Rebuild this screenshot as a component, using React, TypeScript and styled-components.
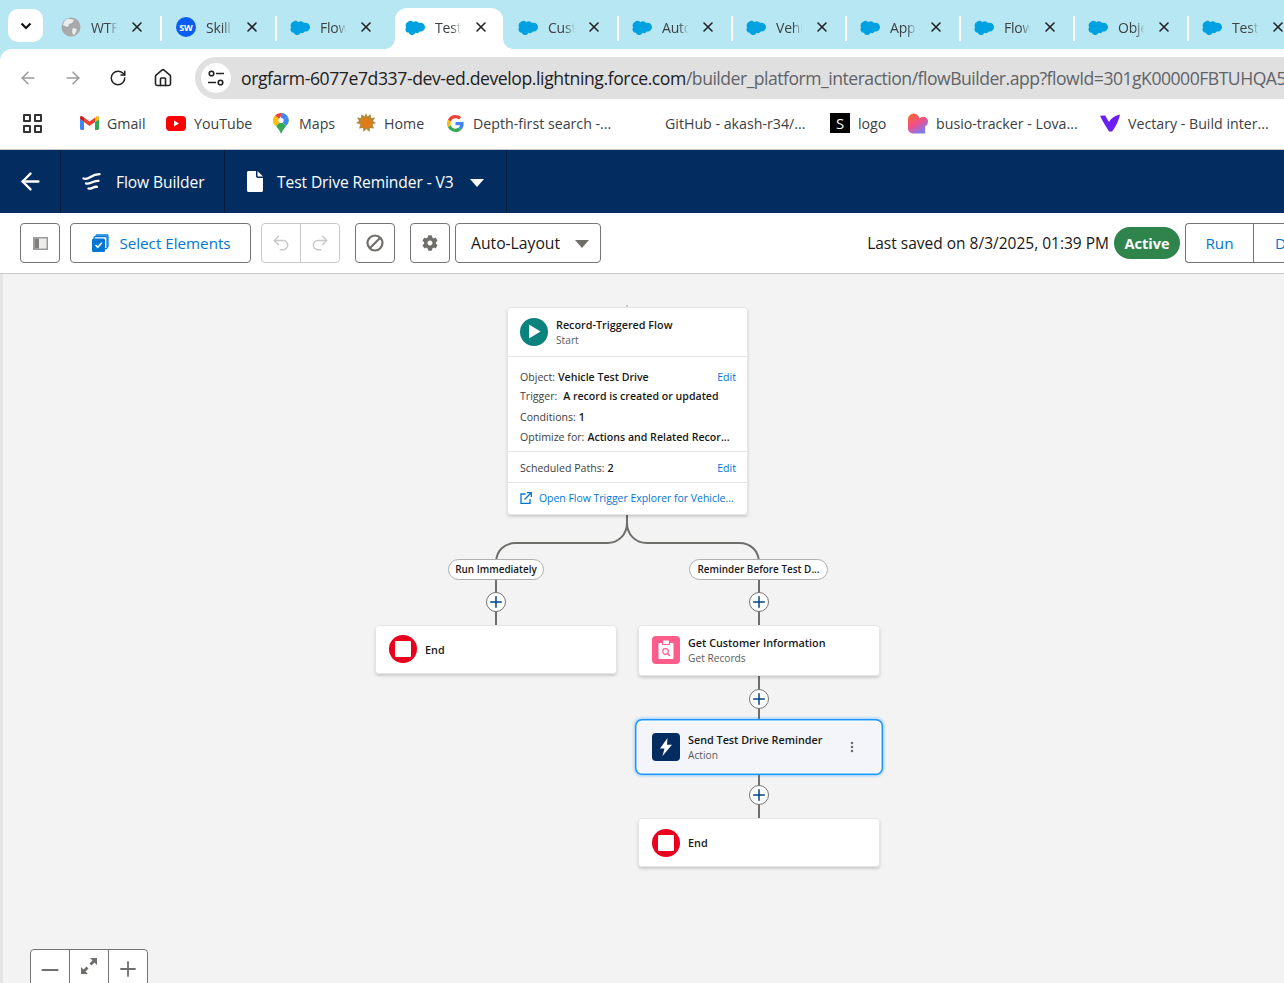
import React from 'react'
import styled, { createGlobalStyle } from 'styled-components'
import { ArrowLeft, ArrowRight, House, Minus, MoreVertical, Plus, Redo2, RotateCw, Undo2, X } from 'lucide-react'
import { FaCog } from 'react-icons/fa'

const Global = createGlobalStyle`
    html, body { margin: 0; padding: 0; background: #fff; }
    body { font-family: "Open Sans", "Noto Sans", sans-serif; color: #181818; }
    * { box-sizing: border-box; }
`

const Page = styled.div`
    width: 1284px;
    height: 983px;
    overflow: hidden;
    display: flex;
    flex-direction: column;
    background: #b7e7f3;
`

/* browser chrome */
const TabStrip = styled.div`
    height: 49px;
    flex-shrink: 0;
    display: flex;
    align-items: flex-start;
    padding: 8px 0 0 8px;
`

const TabMenu = styled.div`
    width: 35px;
    height: 33px;
    margin: 1px 5px 0 0;
    border-radius: 10px;
    background: #fff;
    display: flex;
    align-items: center;
    justify-content: center;
    flex-shrink: 0;
`

const Tab = styled.div<{ $active?: boolean; $sep?: boolean }>`
    position: relative;
    width: 114px;
    height: 41px;
    flex-shrink: 0;
    display: flex;
    align-items: center;
    padding: 0 0 3px 13px;
    z-index: ${p => (p.$active ? 2 : 1)};
    &:nth-child(2) { margin-right: 1px; }
    ${p => p.$sep && `
        &::after {
            content: '';
            position: absolute;
            right: 0;
            top: 8px;
            width: 2px;
            height: 25px;
            background: #fff;
        }
    `}
    ${p => p.$active && `
        padding-left: 14px;
        &::before {
            content: '';
            position: absolute;
            left: 4px;
            right: 2px;
            top: 0;
            bottom: 0;
            background: #fff;
            border-radius: 12px 12px 0 0;
            z-index: -1;
        }
        &::after {
            content: '';
            position: absolute;
            left: -6px;
            right: -8px;
            bottom: 0;
            height: 10px;
            z-index: -1;
            background:
                radial-gradient(circle at 0 0, #b7e7f3 9.5px, #fff 10px) left bottom / 10px 10px no-repeat,
                radial-gradient(circle at 100% 0, #b7e7f3 9.5px, #fff 10px) right bottom / 10px 10px no-repeat;
        }
    `}
`

const TabIcon = styled.div`
    width: 20px;
    height: 20px;
    margin-right: 10px;
    flex-shrink: 0;
    display: flex;
    align-items: center;
    justify-content: center;
`

const SwBadge = styled(TabIcon)`
    border-radius: 50%;
    background: #0b5cf0;
    color: #fff;
    font-size: 9px;
    font-weight: 700;
`

const TabTitle = styled.span`
    width: 28px;
    margin-right: 2px;
    overflow: hidden;
    white-space: nowrap;
    font-size: 14px;
    letter-spacing: -0.2px;
    color: #3c4043;
    -webkit-mask-image: linear-gradient(90deg, #000 60%, transparent 95%);
    mask-image: linear-gradient(90deg, #000 60%, transparent 95%);
`

const TabClose = styled.div`
    width: 18px;
    height: 18px;
    margin-left: 7px;
    display: flex;
    align-items: center;
    justify-content: center;
    color: #222;
`

const Chrome = styled.div`
    background: #fff;
    border-radius: 12px 0 0 0;
    flex-shrink: 0;
    position: relative;
`

const AddressRow = styled.div`
    height: 50px;
    padding: 8px 0 0 18px;
    display: flex;
    align-items: flex-start;
`

const NavButton = styled.div<{ $muted?: boolean }>`
    width: 20px;
    height: 20px;
    margin: 11px 25px 0 0;
    display: flex;
    align-items: center;
    justify-content: center;
    color: ${p => (p.$muted ? '#9a9a9a' : '#222')};
`

const Omnibox = styled.div`
    flex: 1;
    min-width: 0;
    height: 42px;
    margin-left: -3px;
    padding-left: 6px;
    border-radius: 21px 0 0 21px;
    background: #e0e0e0;
    display: flex;
    align-items: center;
    overflow: hidden;
`

const SiteInfo = styled.div`
    width: 30px;
    height: 30px;
    margin-right: 10px;
    border-radius: 50%;
    background: #fff;
    flex-shrink: 0;
    display: flex;
    align-items: center;
    justify-content: center;
`

const Url = styled.div`
    white-space: nowrap;
    font-size: 17.6px;
    letter-spacing: -0.5px;
    color: #5f6368;
    b { font-weight: 400; color: #202124; letter-spacing: -0.41px; }
`

const BookmarkRow = styled.div`
    height: 51px;
    padding: 0 0 2px 23px;
    border-bottom: 1px solid #c9c9c9;
    display: flex;
    align-items: center;
    overflow: hidden;
`

const AppsGrid = styled.div`
    width: 19px;
    height: 19px;
    margin-right: 18px;
    display: grid;
    grid-template-columns: 8px 8px;
    grid-template-rows: 8px 8px;
    gap: 3px;
    span { border: 2px solid #333; border-radius: 1px; }
`

const BookmarkDivider = styled.div`
    width: 2px;
    height: 20px;
    margin-right: 19px;
    background: #b7e7f3;
`

const Bookmark = styled.div<{ $w: number }>`
    width: ${p => p.$w}px;
    flex-shrink: 0;
    display: flex;
    align-items: center;
    gap: 8px;
    font-size: 14.2px;
    color: #3c4043;
    white-space: nowrap;
`

const BookmarkIcon = styled.div`
    width: 20px;
    height: 20px;
    flex-shrink: 0;
    display: flex;
    align-items: center;
    justify-content: center;
`

const LogoS = styled(BookmarkIcon)`
    background: #000;
    color: #fff;
    font-size: 15px;
`

/* flow builder header */
const Header = styled.div`
    height: 63px;
    flex-shrink: 0;
    background: #032d60;
    display: flex;
    color: #fff;
`

const HeaderCell = styled.div<{ $w: number; $pl?: number }>`
    width: ${p => p.$w}px;
    border-right: 1px solid #021c3d;
    display: flex;
    align-items: center;
    font-size: 15.6px;
    padding-left: ${p => p.$pl ?? 21}px;
    letter-spacing: -0.1px;
`

const HeaderIcon = styled.div<{ $mr: number }>`
    margin-right: ${p => p.$mr}px;
    display: flex;
    align-items: center;
`

const Caret = styled.div<{ $color: string; $ml?: number }>`
    width: 0;
    height: 0;
    margin-left: ${p => p.$ml ?? 0}px;
    margin-top: 2px;
    border-left: 7px solid transparent;
    border-right: 7px solid transparent;
    border-top: 8px solid ${p => p.$color};
`

/* builder toolbar */
const Toolbar = styled.div`
    height: 61px;
    flex-shrink: 0;
    background: #fff;
    border-bottom: 1px solid #c9c9c9;
    display: flex;
    align-items: flex-start;
    padding: 10px 0 0 20px;
    overflow: hidden;
`

const ToolButton = styled.div<{ $w: number; $ml?: number; $disabled?: boolean }>`
    width: ${p => p.$w}px;
    height: 40px;
    margin-left: ${p => p.$ml ?? 0}px;
    flex-shrink: 0;
    border: 1px solid ${p => (p.$disabled ? '#c9c9c9' : '#747474')};
    border-radius: 4px;
    background: #fff;
    display: flex;
    align-items: center;
    justify-content: center;
    font-size: 15.2px;
`

const ButtonGroup = styled(ToolButton)`
    justify-content: flex-start;
`

const GroupPart = styled.div<{ $w: number; $divider?: string }>`
    width: ${p => p.$w}px;
    height: 100%;
    display: flex;
    align-items: center;
    justify-content: center;
    color: #c9c9c9;
    ${p => p.$divider && `border-right: 1px solid ${p.$divider};`}
`

const SelectButton = styled(ToolButton)`
    gap: 10px;
    color: #0176d3;
    padding-left: 2px;
`

const LayoutSelect = styled(ToolButton)`
    justify-content: space-between;
    padding: 0 11px 0 15px;
    color: #181818;
    font-size: 15.7px;
`

const SavedText = styled.div`
    margin-left: auto;
    height: 40px;
    display: flex;
    align-items: center;
    font-size: 15.5px;
    white-space: nowrap;
`

const ActivePill = styled.div`
    width: 66px;
    height: 32px;
    margin: 4px 5px 0 5px;
    border-radius: 16px;
    background: #2e844a;
    color: #fff;
    font-size: 14.5px;
    font-weight: 700;
    display: flex;
    align-items: center;
    justify-content: center;
    flex-shrink: 0;
`

const RunGroup = styled.div`
    width: 99px;
    height: 40px;
    flex-shrink: 0;
    display: flex;
    border: 1px solid #747474;
    border-right: 0;
    border-radius: 4px 0 0 4px;
    color: #0176d3;
    font-size: 15.3px;
    overflow: hidden;
`

const RunPart = styled.div`
    width: 68px;
    flex-shrink: 0;
    border-right: 1px solid #747474;
    display: flex;
    align-items: center;
    justify-content: center;
`

const DebugPart = styled.div`
    padding-left: 21px;
    display: flex;
    align-items: center;
`

/* canvas: nodes are placed on a free canvas */
const Canvas = styled.div`
    position: relative;
    flex: 1;
    background: #f3f3f3;
    border-left: 3px solid #e4e4e4;
    overflow: hidden;
`

const Wires = styled.svg`
    position: absolute;
    left: -3px;
    top: 0;
`

const Node = styled.div<{ $x: number; $y: number; $w: number; $h?: number; $selected?: boolean }>`
    position: absolute;
    left: ${p => p.$x - 3}px;
    top: ${p => p.$y - 274}px;
    width: ${p => p.$w}px;
    ${p => p.$h && `height: ${p.$h}px;`}
    background: ${p => (p.$selected ? '#f3f5fa' : '#fff')};
    border-radius: 4px;
    box-shadow: ${p =>
        p.$selected
            ? '0 0 0 1.5px #fff, 0 0 0 3px #1b96ff, 0 0 3px 4px rgba(27,150,255,.4)'
            : 'inset 0 0 0 1px #e5e5e5, 0 2px 3px rgba(0,0,0,.16)'};
`

const NodeRow = styled.div<{ $h: number; $pl?: number }>`
    height: ${p => p.$h}px;
    padding-left: ${p => p.$pl ?? 14}px;
    display: flex;
    align-items: center;
    gap: 8px;
`

const NodeText = styled.div`
    display: flex;
    flex-direction: column;
    gap: 3px;
    flex: 1;
    min-width: 0;
    padding-top: 1px;
`

const NodeTitle = styled.div`
    font-size: 10.8px;
    line-height: 13px;
    font-weight: 600;
    color: #181818;
    white-space: nowrap;
`

const NodeSub = styled.div`
    font-size: 10.2px;
    line-height: 13px;
    color: #5c5c5c;
`

const IconDisc = styled.div<{ $bg: string; $square?: boolean }>`
    width: 28px;
    height: 28px;
    flex-shrink: 0;
    border-radius: ${p => (p.$square ? '4px' : '50%')};
    background: ${p => p.$bg};
    display: flex;
    align-items: center;
    justify-content: center;
`

const StopSquare = styled.div`
    width: 16px;
    height: 16px;
    background: #fff;
    border-radius: 1px;
`

const Section = styled.div<{ $pt: number; $pb: number }>`
    border-top: 1px solid #e5e5e5;
    padding: ${p => p.$pt}px 12px ${p => p.$pb}px 13px;
`

const Detail = styled.div<{ $h: number }>`
    height: ${p => p.$h}px;
    display: flex;
    align-items: center;
    font-size: 10.6px;
    color: #3e3e3c;
    white-space: nowrap;
    b { font-weight: 600; color: #181818; margin-left: 3px; }
`

const EditLink = styled.span`
    margin-left: auto;
    color: #0176d3;
`

const ExplorerLink = styled.div`
    height: 33px;
    border-top: 1px solid #e5e5e5;
    padding: 0 0 2px 13px;
    display: flex;
    align-items: center;
    gap: 7px;
    font-size: 10.45px;
    color: #0176d3;
    white-space: nowrap;
`

const PathLabel = styled.div<{ $x: number; $y: number; $w: number }>`
    position: absolute;
    left: ${p => p.$x - 3}px;
    top: ${p => p.$y - 274}px;
    width: ${p => p.$w}px;
    height: 21px;
    padding-bottom: 1px;
    border: 1px solid #aeaeae;
    border-radius: 11px;
    background: #fff;
    display: flex;
    align-items: center;
    justify-content: center;
    font-size: 9.95px;
    font-weight: 600;
    white-space: nowrap;
`

const AddButton = styled.div<{ $cx: number; $cy: number }>`
    position: absolute;
    left: ${p => p.$cx - 13}px;
    top: ${p => p.$cy - 284}px;
    width: 20px;
    height: 20px;
    border: 1.5px solid #747474;
    border-radius: 50%;
    background: #fff;
    color: #014486;
    display: flex;
    align-items: center;
    justify-content: center;
`

const NodeMenu = styled.div`
    width: 14px;
    margin-right: 21px;
    color: #706e6b;
    display: flex;
    justify-content: center;
`

const ZoomControls = styled.div`
    position: absolute;
    left: 27px;
    bottom: -8px;
    width: 118px;
    height: 42px;
    border: 1px solid #747474;
    border-radius: 4px;
    background: #fff;
    display: flex;
    color: #706e6b;
`

const ZoomPart = styled.div<{ $last?: boolean }>`
    flex: 1;
    padding-top: 7px;
    display: flex;
    justify-content: center;
    ${p => !p.$last && 'border-right: 1px solid #747474;'}
`

const Cloud = () => (
    <svg width="21" height="15" viewBox="0 0 24 17">
        <path
            fill="#00a1e0"
            d="M10 2.2a4.2 4.2 0 0 1 3-1.3c1.600 0 3 .9 3.700 2.200a5 5 0 0 1 2-.4c2.900 0 5.300 2.400 5.300 5.300s-2.400 5.400-5.300 5.400l-1-.1a3.900 3.900 0 0 1-5.100 1.600 4.400 4.400 0 0 1-8.200-.3l-.9.100A4.100 4.100 0 0 1 1.400 8.300a4.700 4.700 0 0 1 2-6.300 4.700 4.700 0 0 1 6.600.2z"
        />
    </svg>
)

const Globe = () => (
    <svg width="20" height="20" viewBox="0 0 20 20">
        <circle cx="10" cy="10" r="9.500" fill="#a9a9a9" />
        <path fill="#e8eef0" d="M7 1.500c2 1 5 .5 6 1.500l-2 3-3 1-1 3-3-1-2-1C2.500 4.500 4.500 2.500 7 1.500zM12 11l4 1-2 5-2 1-1-4z" />
    </svg>
)

const tabs = [
    { title: 'WTF', icon: <Globe />, sep: true },
    { title: 'Skill', badge: true, sep: true },
    { title: 'Flow' },
    { title: 'Test', active: true },
    { title: 'Cust', sep: true },
    { title: 'Auto', sep: true },
    { title: 'Vehi', sep: true },
    { title: 'App', sep: true },
    { title: 'Flow', sep: true },
    { title: 'Obje', sep: true },
    { title: 'Test' },
]

const bookmarks: { label: string; w: number; icon: React.ReactNode }[] = [
    {
        label: 'Gmail',
        w: 87,
        icon: (
            <svg width="19" height="14" viewBox="0 0 19 14">
                <path fill="#4285f4" d="M0 3v9.500C0 13.300.7 14 1.500 14H4V6z" />
                <path fill="#34a853" d="M15 6v8h2.500c.8 0 1.500-.7 1.500-1.500V3z" />
                <path fill="#ea4335" d="M4 6V1.500L9.500 5.500 15 1.500V6L9.500 10z" />
                <path fill="#c5221f" d="M0 3 4 6V1.500L2.500.4C1.400-.4 0 .4 0 1.700z" />
                <path fill="#fbbc04" d="M19 3 15 6V1.500L16.500.4C17.600-.4 19 .4 19 1.700z" />
            </svg>
        ),
    },
    {
        label: 'YouTube',
        w: 105,
        icon: (
            <svg width="20" height="15" viewBox="0 0 20 15">
                <rect width="20" height="15" rx="4" fill="#f00" />
                <path d="M8 4.500v6l5-3z" fill="#fff" />
            </svg>
        ),
    },
    {
        label: 'Maps',
        w: 85,
        icon: (
            <svg width="16" height="21" viewBox="0 0 16 21">
                <path fill="#34a853" d="M3 13c2 2.500 4 5 5 8 1-3 3-5 5-8L8 8z" />
                <path fill="#fbbc04" d="M1 11.500 3 13l5-5-2-2z" />
                <path fill="#4285f4" d="M8 0a8 8 0 0 1 7 4L8 8z" />
                <path fill="#ea4335" d="M2 2.500A8 8 0 0 1 8 0L8 3 6 6z" />
                <path fill="#fbbc04" d="M2 2.500 6 6 1 11.500C-.5 8.500-.5 5 2 2.500z" />
                <path fill="#4285f4" d="M15 4c1.500 3 1 6.500-2 9L8 8z" />
                <circle cx="8" cy="7.500" r="2.600" fill="#fff" />
            </svg>
        ),
    },
    {
        label: 'Home',
        w: 89,
        icon: (
            <svg width="20" height="20" viewBox="0 0 20 20">
                <path fill="#b08a3a" d="M10 0l1.500 3.500L14.500 1l.5 4 4-.5-2 3.500 3 2-3.500 1.500 1.500 4-4-.5-.5 4-3-3-3 3-.5-4-4 .5 1.500-4L0 10l3-2-2-3.500 4 .5.500-4 3 2.500z" />
                <circle cx="10" cy="10" r="5.500" fill="#e07b1a" />
            </svg>
        ),
    },
    {
        label: 'Depth-first search -...',
        w: 192,
        icon: (
            <svg width="17" height="17" viewBox="0 0 48 48">
                <path fill="#ea4335" d="M24 9.500c3.500 0 6.700 1.300 9.200 3.500l6.800-6.800C35.900 2.400 30.300 0 24 0 14.600 0 6.500 5.400 2.600 13.200l8 6.200C12.400 13.700 17.700 9.500 24 9.500z" />
                <path fill="#4285f4" d="M47 24.500c0-1.600-.1-3.100-.4-4.500H24v9h12.900c-.6 3-2.200 5.500-4.700 7.200l7.700 6C44.400 38.100 47 31.900 47 24.500z" />
                <path fill="#fbbc05" d="M10.500 28.600C10 27.200 9.800 25.600 9.800 24s.2-3.200.7-4.600l-8-6.200C.9 16.500 0 20.100 0 24s.9 7.500 2.600 10.800z" />
                <path fill="#34a853" d="M24 48c6.500 0 11.900-2.100 15.900-5.800l-7.700-6c-2.100 1.400-4.900 2.300-8.200 2.300-6.300 0-11.600-4.200-13.500-9.900l-8 6.200C6.500 42.600 14.600 48 24 48z" />
            </svg>
        ),
    },
    { label: 'GitHub - akash-r34/...', w: 193, icon: null },
    { label: 'logo', w: 78, icon: 'S' },
    {
        label: 'busio-tracker - Lova...',
        w: 192,
        icon: (
            <svg width="21" height="21" viewBox="0 0 21 21">
                <defs>
                    <linearGradient id="lovable" x1="0" y1="0" x2="0.6" y2="1">
                        <stop offset="0" stopColor="#ff6a1f" />
                        <stop offset="0.55" stopColor="#f0508a" />
                        <stop offset="1" stopColor="#7a7bf0" />
                    </linearGradient>
                </defs>
                <path fill="url(#lovable)" d="M6 0a6 6 0 0 1 6 5.500 5 5 0 0 1 9 3.500 5 5 0 0 1-3 4.500V21H5a5 5 0 0 1-5-5V6a6 6 0 0 1 6-6z" />
            </svg>
        ),
    },
    {
        label: 'Vectary - Build inter...',
        w: 200,
        icon: (
            <svg width="21" height="18" viewBox="0 0 21 18">
                <path fill="#6a1ff0" d="M0 1.500 5.500 1c1.500 3 3 5 4 7 1.500-3 4-6 11.500-8-1.500 7-5 14-8.500 18H9.500C7 14 3 8 0 1.500z" />
            </svg>
        ),
    },
]

const FlowIcon = () => (
    <svg width="20" height="20" viewBox="0 0 20 20" fill="none" stroke="#fff" strokeWidth="2.300" strokeLinecap="round">
        <path d="M1.500 6.500c2.500 1 4.500.2 7-1.500s5-2.800 9-2.800" />
        <path d="M4 11.500c2 .7 3.500 0 5.500-1s4-1.800 7-1.600" />
        <path d="M6.500 16.500c1.500.5 2.500 0 4-.7s2.500-1.200 4.500-1" />
    </svg>
)

const DocIcon = () => (
    <svg width="16" height="21" viewBox="0 0 16 21">
        <path fill="#fff" d="M1.500 0H9v5c0 1 .8 2 2 2h5v12.500c0 .8-.7 1.500-1.500 1.500h-13C.7 21 0 20.300 0 19.500v-18C0 .7.700 0 1.500 0zM10.500 0 16 5.500h-4.500c-.6 0-1-.4-1-1z" />
    </svg>
)

const SelectIcon = () => (
    <svg width="17" height="18" viewBox="0 0 17 18">
        <path fill="none" stroke="#0176d3" strokeWidth="1.300" d="M4 2.500V2c0-.6.400-1 1-1h10c.6 0 1 .4 1 1v10c0 .6-.4 1-1 1h-.5" />
        <rect x="2" y="2.700" width="13" height="12" rx="1" fill="#fff" stroke="#0176d3" strokeWidth="1.200" />
        <rect x="0" y="4.500" width="13" height="13.500" rx="1.500" fill="#0176d3" />
        <path d="M3.500 11l2.300 2.300 4-4.500" fill="none" stroke="#fff" strokeWidth="1.500" />
    </svg>
)

const PanelIcon = () => (
    <svg width="15" height="13" viewBox="0 0 15 13">
        <rect width="15" height="13" fill="#9c9a98" />
        <rect x="1.500" y="1.500" width="12" height="10" fill="#ececec" />
        <rect x="1.500" y="1.500" width="4.500" height="10" fill="#807e7c" />
    </svg>
)

const StopIcon = () => (
    <svg width="18" height="18" viewBox="0 0 18 18" fill="none" stroke="#706e6b" strokeWidth="2.200">
        <circle cx="9" cy="9" r="7.500" />
        <path d="M4 14 14 4" />
    </svg>
)

const TuneIcon = () => (
    <svg width="18" height="18" viewBox="0 0 18 18" fill="none" stroke="#222" strokeWidth="1.600">
        <circle cx="4.500" cy="4.500" r="2.300" />
        <path d="M9 4.500h8M1 13.500h8" />
        <circle cx="13.500" cy="13.500" r="2.300" />
    </svg>
)

const RecordsIcon = () => (
    <svg width="20" height="20" viewBox="0 0 20 20">
        <path fill="#fff" d="M3.500 3H6v2h8V3h2.500c.6 0 1 .4 1 1v14c0 .6-.4 1-1 1h-13c-.6 0-1-.4-1-1V4c0-.6.400-1 1-1zM7 1.500c0-.6.400-1 1-1h4c.6 0 1 .4 1 1V4H7z" />
        <circle cx="9.500" cy="11.500" r="2.800" fill="none" stroke="#fe5c8b" strokeWidth="1.200" />
        <path d="M11.500 13.500 14 16" stroke="#fe5c8b" strokeWidth="1.400" />
    </svg>
)

const BoltIcon = () => (
    <svg width="14" height="18" viewBox="0 0 14 18">
        <path fill="#fff" d="M8.500 0 1 10.500h4.500L3.500 18 13 6.800H8z" />
    </svg>
)

const PlayIcon = () => (
    <svg width="13" height="15" viewBox="0 0 13 15">
        <path fill="#fff" d="M1 .5 12.500 7.500 1 14.500z" />
    </svg>
)

const ExternalIcon = () => (
    <svg width="12" height="12" viewBox="0 0 12 12" fill="none" stroke="#0176d3" strokeWidth="1.300">
        <path d="M5.500 2H1v9.500h9V7" />
        <path d="M4.500 7.500 11 1M7 .7h4.300V5" />
    </svg>
)

const ExpandIcon = () => (
    <svg width="18" height="18" viewBox="0 0 18 18" fill="#706e6b">
        <path d="M17 1v7l-2.500-2.500-3 3-2-2 3-3L10 1zM1 17v-7l2.500 2.500 3-3 2 2-3 3L8 17z" />
    </svg>
)

const App = () => {
    return (
        <Page>
            <Global />
            <TabStrip>
                <TabMenu>
                    <svg width="12" height="8" viewBox="0 0 12 8">
                        <path d="M1.500 1.500 6 6l4.500-4.500" fill="none" stroke="#111" strokeWidth="2.200" />
                    </svg>
                </TabMenu>
                {tabs.map((t, i) => (
                    <Tab key={i} $active={t.active} $sep={t.sep}>
                        {t.badge ? <SwBadge>SW</SwBadge> : <TabIcon>{t.icon ?? <Cloud />}</TabIcon>}
                        <TabTitle>{t.title}</TabTitle>
                        <TabClose>
                            <X size={16} strokeWidth={2.4} />
                        </TabClose>
                    </Tab>
                ))}
            </TabStrip>
            <Chrome>
                <AddressRow>
                    <NavButton $muted>
                        <ArrowLeft size={20} strokeWidth={1.800} />
                    </NavButton>
                    <NavButton $muted>
                        <ArrowRight size={20} strokeWidth={1.800} />
                    </NavButton>
                    <NavButton>
                        <RotateCw size={18} strokeWidth={2} />
                    </NavButton>
                    <NavButton>
                        <House size={20} strokeWidth={1.900} />
                    </NavButton>
                    <Omnibox>
                        <SiteInfo>
                            <TuneIcon />
                        </SiteInfo>
                        <Url>
                            <b>orgfarm-6077e7d337-dev-ed.develop.lightning.force.com</b>
                            /builder_platform_interaction/flowBuilder.app?flowId=301gK00000FBTUHQA5
                        </Url>
                    </Omnibox>
                </AddressRow>
                <BookmarkRow>
                    <AppsGrid>
                        <span />
                        <span />
                        <span />
                        <span />
                    </AppsGrid>
                    <BookmarkDivider />
                    {bookmarks.map(b => (
                        <Bookmark key={b.label} $w={b.w}>
                            {b.icon === 'S' ? <LogoS>S</LogoS> : <BookmarkIcon>{b.icon}</BookmarkIcon>}
                            {b.label}
                        </Bookmark>
                    ))}
                </BookmarkRow>
            </Chrome>
            <Header>
                <HeaderCell $w={61} $pl={17}>
                    <ArrowLeft size={27} strokeWidth={2.100} />
                </HeaderCell>
                <HeaderCell $w={164}>
                    <HeaderIcon $mr={14}>
                        <FlowIcon />
                    </HeaderIcon>
                    Flow Builder
                </HeaderCell>
                <HeaderCell $w={282} $pl={22}>
                    <HeaderIcon $mr={14}>
                        <DocIcon />
                    </HeaderIcon>
                    Test Drive Reminder - V3
                    <Caret $color="#fff" $ml={16} />
                </HeaderCell>
            </Header>
            <Toolbar>
                <ToolButton $w={40}>
                    <PanelIcon />
                </ToolButton>
                <SelectButton $w={181} $ml={10}>
                    <SelectIcon />
                    Select Elements
                </SelectButton>
                <ButtonGroup $w={79} $ml={10} $disabled>
                    <GroupPart $w={39} $divider="#c9c9c9">
                        <Undo2 size={20} strokeWidth={1.800} />
                    </GroupPart>
                    <GroupPart $w={38}>
                        <Redo2 size={20} strokeWidth={1.800} />
                    </GroupPart>
                </ButtonGroup>
                <ToolButton $w={40} $ml={15}>
                    <StopIcon />
                </ToolButton>
                <ToolButton $w={40} $ml={15}>
                    <FaCog size={16} color="#706e6b" />
                </ToolButton>
                <LayoutSelect $w={146} $ml={5}>
                    Auto-Layout
                    <Caret $color="#706e6b" />
                </LayoutSelect>
                <SavedText>Last saved on 8/3/2025, 01:39 PM</SavedText>
                <ActivePill>Active</ActivePill>
                <RunGroup>
                    <RunPart>Run</RunPart>
                    <DebugPart>Debug</DebugPart>
                </RunGroup>
            </Toolbar>
            <Canvas>
                <Wires width="1284" height="709" viewBox="0 274 1284 709" fill="none" stroke="#706e6b" strokeWidth="2">
                    <path d="M627 305v4" stroke="#c9c9c9" />
                    <path d="M627 515v8c0 11-8 20-20 20H516c-12 0-20 8-20 20v62" />
                    <path d="M627 523c0 11 8 20 20 20h92c12 0 20 8 20 20v255" />
                </Wires>
                <Node $x={507} $y={307} $w={241}>
                    <NodeRow $h={49} $pl={13}>
                        <IconDisc $bg="#0b827c">
                            <PlayIcon />
                        </IconDisc>
                        <NodeText>
                            <NodeTitle>Record-Triggered Flow</NodeTitle>
                            <NodeSub>Start</NodeSub>
                        </NodeText>
                    </NodeRow>
                    <Section $pt={10} $pb={5}>
                        <Detail $h={19}>
                            Object:<b>Vehicle Test Drive</b>
                            <EditLink>Edit</EditLink>
                        </Detail>
                        <Detail $h={19}>
                            Trigger:<b>&nbsp;A record is created or updated</b>
                        </Detail>
                        <Detail $h={23}>
                            Conditions:<b>1</b>
                        </Detail>
                        <Detail $h={18}>
                            Optimize for:<b>Actions and Related Recor...</b>
                        </Detail>
                    </Section>
                    <Section $pt={6} $pb={4}>
                        <Detail $h={20}>
                            Scheduled Paths:<b>2</b>
                            <EditLink>Edit</EditLink>
                        </Detail>
                    </Section>
                    <ExplorerLink>
                        <ExternalIcon />
                        Open Flow Trigger Explorer for Vehicle...
                    </ExplorerLink>
                </Node>

                <PathLabel $x={448} $y={559} $w={96}>
                    Run Immediately
                </PathLabel>
                <PathLabel $x={689} $y={559} $w={139}>
                    Reminder Before Test D...
                </PathLabel>
                <AddButton $cx={496} $cy={602}>
                    <Plus size={18} strokeWidth={2} />
                </AddButton>
                <AddButton $cx={759} $cy={602}>
                    <Plus size={18} strokeWidth={2} />
                </AddButton>
                <AddButton $cx={759} $cy={699}>
                    <Plus size={18} strokeWidth={2} />
                </AddButton>
                <AddButton $cx={759} $cy={795}>
                    <Plus size={18} strokeWidth={2} />
                </AddButton>

                <Node $x={375} $y={625} $w={242} $h={49}>
                    <NodeRow $h={48}>
                        <IconDisc $bg="#ea001e">
                            <StopSquare />
                        </IconDisc>
                        <NodeTitle>End</NodeTitle>
                    </NodeRow>
                </Node>
                <Node $x={638} $y={625} $w={242} $h={51}>
                    <NodeRow $h={50}>
                        <IconDisc $bg="#fe5c8b" $square>
                            <RecordsIcon />
                        </IconDisc>
                        <NodeText>
                            <NodeTitle>Get Customer Information</NodeTitle>
                            <NodeSub>Get Records</NodeSub>
                        </NodeText>
                    </NodeRow>
                </Node>
                <Node $x={638} $y={722} $w={242} $h={50} $selected>
                    <NodeRow $h={50}>
                        <IconDisc $bg="#032d60" $square>
                            <BoltIcon />
                        </IconDisc>
                        <NodeText>
                            <NodeTitle>Send Test Drive Reminder</NodeTitle>
                            <NodeSub>Action</NodeSub>
                        </NodeText>
                        <NodeMenu>
                            <MoreVertical size={14} strokeWidth={2.400} />
                        </NodeMenu>
                    </NodeRow>
                </Node>
                <Node $x={638} $y={818} $w={242} $h={49}>
                    <NodeRow $h={49}>
                        <IconDisc $bg="#ea001e">
                            <StopSquare />
                        </IconDisc>
                        <NodeTitle>End</NodeTitle>
                    </NodeRow>
                </Node>

                <ZoomControls>
                    <ZoomPart>
                        <Minus size={26} strokeWidth={1.800} />
                    </ZoomPart>
                    <ZoomPart>
                        <ExpandIcon />
                    </ZoomPart>
                    <ZoomPart $last>
                        <Plus size={24} strokeWidth={1.800} />
                    </ZoomPart>
                </ZoomControls>
            </Canvas>
        </Page>
    )
}

export default App
